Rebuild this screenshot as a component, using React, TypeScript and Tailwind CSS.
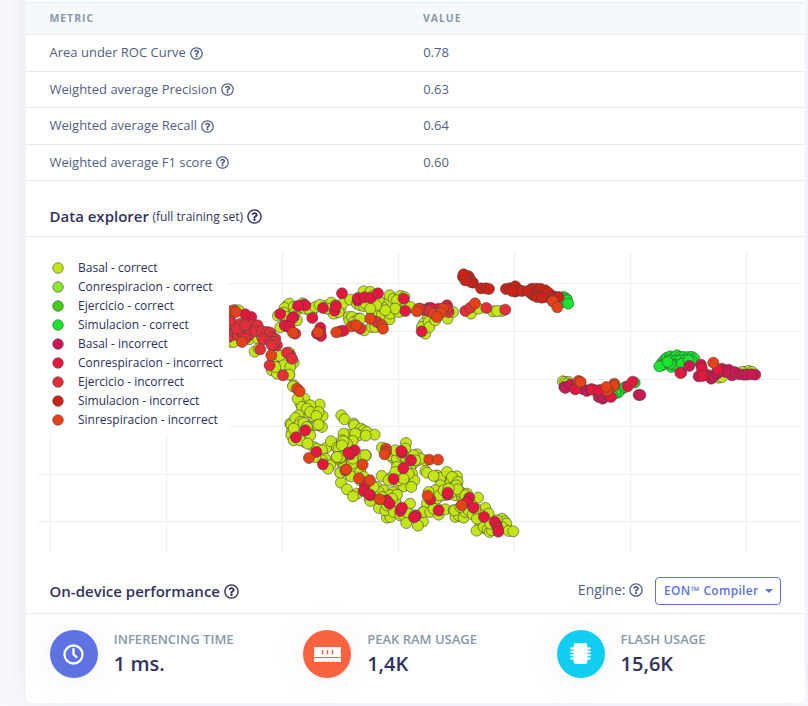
import { FaRegQuestionCircle } from "react-icons/fa";
import type { ReactNode } from "react";

type Kind = "B" | "C" | "E" | "S" | "bi" | "ci" | "ei" | "si" | "ri";

const series: { kind: Kind; label: string; color: string }[] = [
  { kind: "B", label: "Basal - correct", color: "#c2e616" },
  { kind: "C", label: "Conrespiracion - correct", color: "#8ee62e" },
  { kind: "E", label: "Ejercicio - correct", color: "#40cf17" },
  { kind: "S", label: "Simulacion - correct", color: "#17e62c" },
  { kind: "bi", label: "Basal - incorrect", color: "#cf1751" },
  { kind: "ci", label: "Conrespiracion - incorrect", color: "#e6173f" },
  { kind: "ei", label: "Ejercicio - incorrect", color: "#e62e3a" },
  { kind: "si", label: "Simulacion - incorrect", color: "#cf2217" },
  { kind: "ri", label: "Sinrespiracion - incorrect", color: "#e64117" },
];

type Cluster = { origin: [number, number]; points: Partial<Record<Kind, string>> };

// Point coordinates are thirds of a pixel, relative to each cluster's origin.
const clusters: Cluster[] = [
  {
    origin: [225, 275],
    points: {
      B: "185,92 188,105 172,120 220,100 262,105 300,92 318,95 332,112 192,85 178,98 175,112 158,121 205,95 183,125 165,156 215,135 210,110 232,84 225,95 240,100 258,110 250,100 270,95 283,89 310,100 318,82 325,115 345,102 352,85 330,90 340,110 375,73 305,100 12,200 25,200 72,192 98,190 110,185 88,229 100,220 30,105 40,105 145,262 165,242 192,232 205,262 200,255 160,275 140,285 155,295 192,298 175,270 150,275 195,275 370,125 380,140 400,130 372,135 205,330",
      ci: "235,88 240,90 205,125 200,130 165,116 218,92 293,98 328,106 332,92 350,54 261,128 185,153 178,150 193,156 285,157 285,170 287,182 275,175 345,168 355,166 78,125 60,117",
      ei: "20,165 48,160 60,170 5,140 8,165 10,185 18,150 18,180 30,170 38,180 50,170 65,155 55,180 45,145 75,165 80,150 97,150 70,180 35,160 60,150 90,168 110,168 125,170 135,172 140,185 113,192 150,190 155,210 145,210 135,200 148,200 140,210 105,222 195,240 185,232 200,250 133,270 173,300 210,175 60,190 15,135",
      ri: "12,108 25,105 32,110 50,200 138,240 203,172 279,171 333,171",
    },
  },
  {
    origin: [350, 275],
    points: {
      B: "90,80 105,92 120,100 130,85 125,75 88,100 108,118 65,115 55,75 40,48 60,50 70,60 20,85 30,90 40,92 45,85 75,85 72,107 85,110 95,118 110,85 97,95 118,60 130,70 150,62 162,65 160,78 140,75 118,132 120,115 150,108 145,110 180,95 135,100 105,105 5,125 10,140 25,130 42,165 65,155 75,155 30,130 232,125 220,145 215,155 225,175 235,140 237,155 292,130 308,110 255,135 362,115 385,100 428,108 455,107 440,107 85,75 78,90 60,100",
      ci: "22,75 23,68 43,66 62,67 83,54 160,70 165,107 235,98 243,98 290,90 214,168 265,100",
      ei: "30,160 80,140 225,105 237,107 295,110 345,107 360,97 408,98 465,103 210,100 290,100",
      ri: "60,130 5,153 18,150 95,150 98,160 205,100 200,108 250,115 278,100 272,112 260,125 374,84",
    },
  },
  {
    origin: [450, 260],
    points: {
      S: "340,110 348,115 345,125 335,125 350,120 354,130",
      si: "40,45 38,50 48,48 55,48 50,58 60,58 68,67 62,65 48,52 45,60 40,42 92,84 107,84 116,86 167,86 178,84 190,85 195,94 195,78 207,90 185,92 215,92 245,85 243,100 250,105 233,92 258,85 262,95 270,85 270,105 285,90 285,110 295,98 260,110 275,112 310,108 317,112 325,110",
      ri: "307,123 321,141",
    },
  },
  {
    origin: [545, 340],
    points: {
      B: "53,123 60,125 70,125 65,130 520,112 530,110 600,95 610,92 590,95 620,95 560,100",
      S: "350,68 358,58 365,52 375,48 385,52 395,45 405,50 415,50 430,50 440,50 447,55 440,62 372,60 390,62 405,60 420,60 378,80 390,75 400,75 420,70 410,70 350,75 342,78 375,70 430,60 367,65 268,127 228,147 218,157 210,158 240,140 200,165",
      bi: "57,140 60,143 75,133 90,145 92,140 105,135 115,147 125,152 137,147 160,155 160,170 172,175 175,170 280,164 285,164 165,150 150,150 432,77 467,73 460,108 475,100 490,105 498,115 505,108 515,100 530,85 550,88 560,105 568,95 540,95 520,95 582,102 595,103 605,103 630,103 618,102 190,165",
      ci: "90,147 140,147 247,138 262,124 185,158 197,170 162,150 408,97 405,98 470,85 472,107 517,87",
      ri: "100,122 106,125 504,67 207,130 205,137 187,150 183,140",
    },
  },
  {
    origin: [275, 375],
    points: {
      B: "85,95 118,112 90,110 60,140 58,155 80,160 65,175 85,185 92,152 118,130 50,165 70,190 88,200 180,210 195,225 210,222 225,215 205,235 220,250 215,262 200,262 235,240 205,275 53,33 42,-2 87,70 75,85 67,70 80,95 133,88 105,90 95,100 115,125 105,110 142,122 130,110 123,122 70,120 45,145 48,148 60,128 75,140 70,150 85,143 100,165 140,155 125,150 130,148 48,180 55,195 75,195 100,175 105,180 95,155 55,160 115,215 125,220 97,205 152,218 167,198 140,225 150,250 165,270 158,280 140,255 120,245 198,120 208,132 235,145 237,150 257,160 265,165 275,170 298,178 250,180 271,181 218,178 240,175 205,175 185,218 200,195 232,197 215,205 205,198 190,222 185,245 200,210 190,250 195,248 272,240 260,240 232,250 230,260 195,292 225,300 238,280 255,280",
      ci: "90,165 62,186 123,230 143,267",
      ri: "65,40 73,48 101,248",
    },
  },
  {
    origin: [320, 430],
    points: {
      B: "115,110 105,122 140,170 155,180 205,235 230,238 225,212 265,95 250,100 240,112 245,135 262,145 235,165 215,140 270,78 278,100 275,150 225,90 62,157 80,177 110,190 98,198 60,127 92,138 95,100 60,80 50,80 135,75 97,85 120,125 148,205 150,212 185,52 200,60 215,80 210,75 257,38 255,55 230,85 245,75 255,80 290,72 292,90 280,85 230,110 225,125 270,115 260,120 275,130 282,150 265,130 250,155 250,168 273,170 235,150 184,137 205,150 170,170 190,180 175,185 160,170 218,185 210,195 230,193 215,205 190,215 176,233 200,262 210,260 195,240 220,245 240,255 250,255 269,220 265,250 258,278 283,255 308,273 293,286 308,245 185,200 200,225 130,140 120,150 225,60 250,145",
      ci: "103,60 90,72 84,67 134,165 130,182 150,195 146,192 199,210 208,220 240,242 245,232 245,67 243,62 272,90 249,114 220,146 287,256 281,261",
      ri: "75,120 78,117 127,103 116,144 149,150 178,207 197,55 197,65 193,72 327,88 353,88",
    },
  },
  {
    origin: [400, 440],
    points: {
      B: "125,122 145,130 160,140 150,160 165,165 185,170 130,165 110,175 190,185 200,195 210,208 182,215 180,228 240,215 250,235 255,245 265,255 285,260 300,248 245,262 75,92 80,97 110,105 120,118 120,112 100,107 140,95 170,108 155,110 172,125 168,135 120,135 105,150 85,155 118,165 130,150 155,155 180,155 172,147 200,160 195,165 215,180 233,172 80,190 70,215 90,215 115,223 120,210 135,207 160,210 165,230 175,225 190,232 163,210 195,215 205,210 217,222 180,200 75,60 60,55 100,205 235,210 258,215 255,203 245,225 240,245 240,262 229,271 250,260 262,268 268,275 275,270 280,245 305,235 313,243 318,250 305,260 325,272 339,273 290,240 230,235 265,220 270,250 225,205 215,195 145,145 40,45 45,60 30,60",
      ci: "90,178 142,163 142,157 115,210 207,172 200,185 220,202 251,230 288,252 283,244 292,263 294,274",
      ri: "82,166 184,195",
    },
  },
];

function pointsOf(kind: Kind) {
  return clusters.flatMap(({ origin, points }) =>
    (points[kind] ?? "")
      .split(" ")
      .filter(Boolean)
      .map((pair) => {
        const [x, y] = pair.split(",").map(Number);
        return [origin[0] + x / 3 + 0.3, origin[1] + y / 3 + 0.3];
      }),
  );
}

const verticals = [50, 166, 282, 398, 514, 630, 746];
const horizontals = [283, 331, 379, 426, 474, 521];

function Scatter() {
  return (
    <svg className="block h-[340px] w-[779px]" viewBox="26 237 779 340">
      {verticals.map((x) => (
        <rect key={x} x={x} y={253} width={1} height={299} fill="#eeeeee" />
      ))}
      {horizontals.map((y) => (
        <rect key={y} x={38} y={y} width={762} height={1} fill="#eeeeee" />
      ))}
      {series.map((s) => (
        <g key={s.kind} fill={s.color} stroke="#444444" strokeOpacity={0.75} strokeWidth={0.8}>
          {pointsOf(s.kind).map(([x, y], i) => (
            <circle key={i} cx={x} cy={y} r={5.5} />
          ))}
        </g>
      ))}
    </svg>
  );
}

function Legend() {
  return (
    <ul className="absolute top-[16px] left-[12px] h-[181px] w-[191px] bg-white pt-[5px]">
      {series.map((s) => (
        <li key={s.kind} className="flex h-[19px] items-center gap-[14px] pl-[14px] text-[12px] text-[#2a2f5b]">
          <svg className="h-3 w-3 shrink-0" viewBox="0 0 12 12">
            <circle cx="6" cy="6" r="5.3" fill={s.color} stroke="#444444" strokeOpacity={0.75} strokeWidth={0.8} />
          </svg>
          <span className="whitespace-nowrap">{s.label}</span>
        </li>
      ))}
    </ul>
  );
}

const metrics = [
  { name: "Area under ROC Curve", value: "0.78", height: "h-[37px]" },
  { name: "Weighted average Precision", value: "0.63", height: "h-[36px]" },
  { name: "Weighted average Recall", value: "0.64", height: "h-[37px]" },
  { name: "Weighted average F1 score", value: "0.60", height: "h-[36px]" },
];

function ClockIcon() {
  return (
    <svg className="mr-px h-[21px] w-[21px]" viewBox="0 0 21 21" fill="none" stroke="currentColor" strokeWidth="2.3">
      <circle cx="10.5" cy="10.5" r="9" />
      <path d="M10.5 4.2v6.2l3.6 3.2" />
    </svg>
  );
}

function MemoryIcon() {
  return (
    <svg className="h-[15px] w-[27px]" viewBox="0 0 27 15" fill="currentColor">
      <path
        fillRule="evenodd"
        d="M.8 0h25.4q.8 0 .8.8v2q-1.5 1.5 0 3V10H0V5.8q1.5-1.5 0-3v-2Q0 0 .8 0zM7.8 3v4.5h1.4V3zM12.8 3v4.5h1.4V3zM17.8 3v4.5h1.4V3z"
      />
      <path d="M0 11h27v4h-2.6v-1h-.6v1h-4.2v-1H19v1h-4.2v-1h-.6v1H10v-1h-.6v1H5.2v-1h-.6v1H0z" />
    </svg>
  );
}

function ChipIcon() {
  return (
    <svg className="-mt-px h-[21px] w-[21px]" viewBox="0 0 21 21" fill="currentColor">
      <rect x="3.8" y="0" width="13.4" height="21" rx="1.8" />
      {[4.2, 7.6, 11, 14.4].map((y) => (
        <path key={y} d={`M1.2 ${y}h18.6v.6h1.2v1.1h-1.2v.6H1.2v-.6H0v-1.1h1.2z`} />
      ))}
    </svg>
  );
}

function Stat({ color, icon, label, value }: { color: string; icon: ReactNode; label: string; value: string }) {
  return (
    <div className="flex w-[253.4px] shrink-0 gap-[15.8px]">
      <div
        className={`flex h-12 w-12 shrink-0 items-center justify-center rounded-full text-white shadow-[0_0_32px_rgba(136,152,170,0.12)] ${color}`}
      >
        {icon}
      </div>
      <div>
        <div className="-mt-px text-[13px] leading-[20px] font-semibold text-[#8898aa]">{label}</div>
        <div className="mt-[2px] text-[20px] leading-[26px] font-semibold text-[#32325d]">{value}</div>
      </div>
    </div>
  );
}

export default function App() {
  return (
    <div className="h-[706px] w-[808px] overflow-hidden bg-[#f8f9fe] pl-[26px] font-['Open_Sans','Noto_Sans',sans-serif]">
      <main className="-mt-10 h-[743px] w-[779px] rounded-md bg-white pt-[42px] shadow-[0_0_32px_rgba(136,152,170,0.15)]">
        <div className="flex h-[33px] items-center border-y border-[#e9ecef] bg-[#f6f9fc] pt-px pl-[23.5px] text-[10.4px] font-bold tracking-[1px] text-[#8898aa]">
          <span className="w-[373.5px]">METRIC</span>
          <span>VALUE</span>
        </div>
        {metrics.map((m) => (
          <div
            key={m.name}
            className={`flex items-center border-b border-[#e9ecef] pl-[23.5px] text-[13px] text-[#525f7f] ${m.height}`}
          >
            <span className="flex w-[373.7px] items-center gap-[4px]">
              {m.name} <FaRegQuestionCircle size={13} />
            </span>
            <span>{m.value}</span>
          </div>
        ))}
        <div className="flex h-[56px] items-center border-b border-[#e9ecef] pt-[16px] pl-[23.5px] text-[#32325d]">
          <h2 className="text-[15px] font-semibold">Data explorer</h2>
          <span className="ml-[3.5px] pt-px text-[12px]">(full training set)</span>
          <FaRegQuestionCircle className="ml-[4px]" size={15} />
        </div>
        <section className="relative h-[332px]">
          <Scatter />
          <Legend />
        </section>
        <div className="flex h-[45px] items-center border-b border-[#e9ecef] pr-6 pl-[23.5px]">
          <h2 className="text-[15px] font-semibold text-[#32325d]">On-device performance</h2>
          <FaRegQuestionCircle className="ml-1 text-[#32325d]" size={15} />
          <div className="ml-auto flex items-center pb-[3px] text-[#525f7f]">
            <span className="text-[14px]">Engine:</span>
            <FaRegQuestionCircle className="ml-[3.5px]" size={14} />
          </div>
          <button className="ml-3 flex h-7 w-[126px] items-center justify-between rounded border border-[#5e72e4] pr-[7px] pl-2 text-[12px] font-semibold tracking-[0.3px] whitespace-nowrap text-[#5e72e4]">
            EON™ Compiler
            <span className="border-x-4 border-t-4 border-x-transparent border-t-[#5e72e4]" />
          </button>
        </div>
        <div className="flex pt-4 pl-6">
          <Stat color="bg-[#5e72e4]" icon={<ClockIcon />} label="INFERENCING TIME" value="1 ms." />
          <Stat color="bg-[#fb6340]" icon={<MemoryIcon />} label="PEAK RAM USAGE" value="1,4K" />
          <Stat color="bg-[#11cdef]" icon={<ChipIcon />} label="FLASH USAGE" value="15,6K" />
        </div>
      </main>
    </div>
  );
}
